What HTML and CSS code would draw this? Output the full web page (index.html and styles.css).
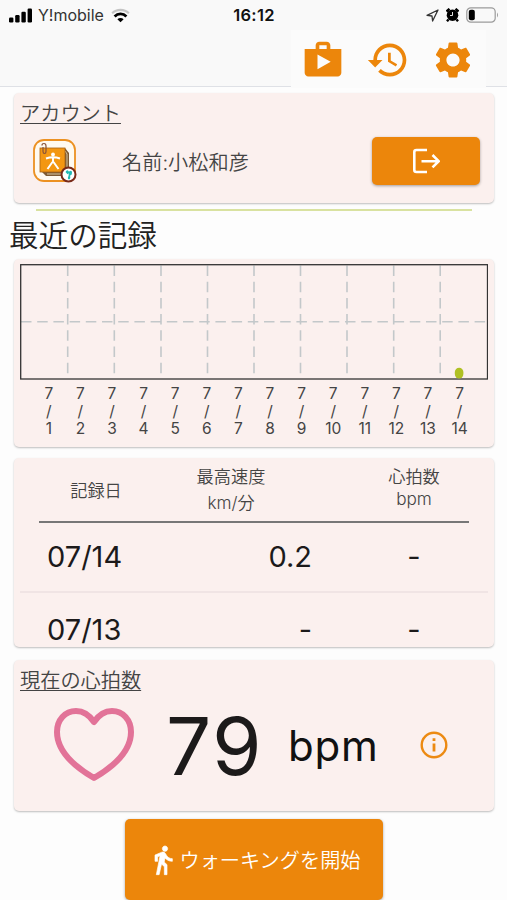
FILE: index.html
```html
<!DOCTYPE html>
<html lang="ja">
<head>
  <meta charset="UTF-8">
  <meta name="viewport" content="width=device-width, initial-scale=1.0">
  <title>ウォーキング</title>
  <link rel="stylesheet" href="styles.css">
</head>
<body>
<header class="header">
  <div class="status-bar">
    <div class="carrier">
      <svg class="signal" viewBox="0 0 23 15">
        <rect x="0" y="9.500" width="4.400" height="5" rx="1.200"/>
        <rect x="6.200" y="7" width="4.400" height="7.500" rx="1.200"/>
        <rect x="12.400" y="3.800" width="4.400" height="10.700" rx="1.200"/>
        <rect x="18.600" y="0.500" width="4.400" height="14" rx="1.200"/>
      </svg>
      <span>Y!mobile</span>
      <svg class="wifi" viewBox="0 0 20 15" fill="none" stroke-width="2.900">
        <path d="M1.200 5.200a12.500 12.500 0 0 1 17.600 0" stroke="#c4c4c4" stroke-width="2.200"/>
        <path d="M3.800 8.500a8.600 8.600 0 0 1 12.400 0" stroke="#000"/>
        <path d="M10 14.500l-3.300-3a4.600 4.600 0 0 1 6.600 0z" fill="#000"/>
      </svg>
    </div>
    <div class="clock">16:12</div>
    <div class="indicators">
      <svg width="13" height="13" viewBox="0 0 13 13" fill="none" stroke="#333" stroke-width="1.300" stroke-linejoin="round">
        <path d="M12 1L1 6.300l5 .7.600 5z"/>
      </svg>
      <svg width="13" height="14" viewBox="0 0 13 14">
        <circle cx="6.500" cy="7.200" r="5.800"/>
        <path d="M.5 3.500L3.500.8M12.500 3.500L9.500.8M2.500 11.500L1 13.300M10.500 11.500l1.500 1.800" stroke="#000" stroke-width="2.400"/>
        <path d="M6.500 4v3.500H4" fill="none" stroke="#fafafa" stroke-width=".9"/>
      </svg>
      <svg width="33" height="16" viewBox="0 0 33 16">
        <rect x=".8" y=".8" width="28.400" height="14.400" rx="4" fill="none" stroke="#9b9b9b" stroke-width="1.200"/>
        <rect x="2.800" y="2.700" width="6" height="10.600" rx="2"/>
        <path d="M31 5.500q2 2.500 0 5z" fill="#9b9b9b"/>
      </svg>
    </div>
  </div>
  <nav class="toolbar">
    <svg viewBox="0 0 24 24"><path d="M16 6V4c0-1.110-.89-2-2-2h-4c-1.110 0-2 .89-2 2v2H2v13c0 1.110.89 2 2 2h16c1.110 0 2-.89 2-2V6h-6zm-6-2h4v2h-4V4zM9 17V9l7.200 4L9 17z"/></svg>
    <svg viewBox="0 0 24 24"><path d="M13 3c-4.970 0-9 4.030-9 9H1l3.890 3.890.07.14L9 12H6c0-3.870 3.130-7 7-7s7 3.130 7 7-3.130 7-7 7c-1.930 0-3.680-.79-4.940-2.060l-1.420 1.420C8.270 19.990 10.510 21 13 21c4.970 0 9-4.030 9-9s-4.030-9-9-9zm-1 5v5l4.280 2.540.72-1.210-3.500-2.080V8H12z"/></svg>
    <svg viewBox="0 0 24 24"><path d="M19.140 12.940c.04-.3.060-.61.060-.94 0-.32-.02-.64-.07-.94l2.030-1.580c.18-.14.23-.41.12-.61l-1.920-3.320c-.12-.22-.37-.29-.59-.22l-2.390.96c-.5-.38-1.030-.7-1.620-.94l-.36-2.540c-.04-.24-.24-.41-.48-.41h-3.840c-.24 0-.43.17-.47.41l-.36 2.540c-.59.24-1.130.57-1.620.94l-2.390-.96c-.22-.08-.47 0-.59.22L2.740 8.870c-.12.21-.08.47.12.61l2.030 1.580c-.05.3-.09.63-.09.94s.02.64.07.94l-2.030 1.580c-.18.14-.23.41-.12.61l1.920 3.320c.12.22.37.29.59.22l2.390-.96c.5.38 1.030.7 1.620.94l.36 2.540c.05.24.24.41.48.41h3.840c.24 0 .44-.17.47-.41l.36-2.540c.59-.24 1.130-.56 1.620-.94l2.390.96c.22.08.47 0 .59-.22l1.920-3.320c.12-.22.07-.47-.12-.61l-2.010-1.580zM12 15.600c-1.980 0-3.600-1.620-3.600-3.600s1.620-3.600 3.600-3.600 3.600 1.620 3.600 3.600-1.620 3.600-3.600 3.600z"/></svg>
  </nav>
</header>

<main>
  <section class="card account">
    <h2 class="card-title">アカウント</h2>
    <div class="account-row">
      <svg class="avatar" viewBox="0 0 44 44">
        <rect x="1" y="1" width="41" height="41" rx="10" fill="#fffaf0" stroke="#ec9122" stroke-width="1.800"/>
        <path d="M8 9h24l4 5v23H13l-5-5z" fill="#7d5a34"/>
        <path d="M32 12l2 3v20H14" fill="none" stroke="#d9c7a0"/>
        <rect x="7" y="9" width="25" height="24" fill="#f39712" stroke="#a96416" stroke-width=".8"/>
        <circle cx="20" cy="15.500" r="1.900" fill="#fff"/>
        <path d="M13 19.500q7-2.500 14 0M20 18v6M19.500 23l-5 7M20.500 23l5 7" fill="none" stroke="#fff" stroke-width="2"/>
        <path d="M9 6.500q0-2 2-2t2 2.500v5.500q0 2-1.500 2t-1.500-2V8" fill="none" stroke="#87523a" stroke-width="1.200"/>
        <circle cx="35.500" cy="35.500" r="7" fill="#fff" stroke="#792a18" stroke-width="2"/>
        <path d="M32.500 33q1.500-3 3-1t-1 3.200zM36 32.500q3-2 3 1t-2 3q1 3-1 4-2-1-.5-3.500z" fill="#22b9b5"/>
      </svg>
      <span class="account-name">名前:小松和彦</span>
      <button class="btn logout" aria-label="ログアウト">
        <svg width="28" height="26" viewBox="0 0 28 26" fill="none" stroke="#fff" stroke-width="2.600">
          <path d="M15 2H4.500Q2.300 2 2.300 4v18q0 2 2.200 2H15M9.500 13.200H26M20.500 7l6.200 6.200-6.200 6.200"/>
        </svg>
      </button>
    </div>
  </section>

  <hr class="divider">
  <h1 class="page-title">最近の記録</h1>

  <section class="card chart">
    <svg class="plot" viewBox="0 0 468 116">
      <g class="grid-lines">
        <path d="M1 57.700H467"/>
        <path d="M47.700 1.500V110M94.300 1.500V110M141 1.500V110M187.500 1.500V110M234 1.500V110M280.500 1.500V110M327 1.500V110M373.700 1.500V110M420.200 1.500V110"/>
      </g>
      <rect x=".7" y=".7" width="466.800" height="114.300" fill="none" stroke="#333" stroke-width="1.300"/>
      <rect x="434.800" y="103.800" width="8.600" height="10.600" rx="4.300" fill="#afc023"/>
    </svg>
    <div class="labels">
      <span>7<br>/<br>1</span>
      <span>7<br>/<br>2</span>
      <span>7<br>/<br>3</span>
      <span>7<br>/<br>4</span>
      <span>7<br>/<br>5</span>
      <span>7<br>/<br>6</span>
      <span>7<br>/<br>7</span>
      <span>7<br>/<br>8</span>
      <span>7<br>/<br>9</span>
      <span>7<br>/<br>10</span>
      <span>7<br>/<br>11</span>
      <span>7<br>/<br>12</span>
      <span>7<br>/<br>13</span>
      <span>7<br>/<br>14</span>
    </div>
  </section>

  <section class="card records">
    <div class="records-head">
      <span class="col-date">記録日</span>
      <span class="col-speed">最高速度<br>km/分</span>
      <span class="col-heart">心拍数<br>bpm</span>
    </div>
    <div class="record">
      <span class="date">07/14</span>
      <span class="speed">0.2</span>
      <span class="heart">-</span>
    </div>
    <div class="record">
      <span class="date">07/13</span>
      <span class="speed">-</span>
      <span class="heart">-</span>
    </div>
  </section>

  <section class="card heart-rate">
    <h2 class="card-title">現在の心拍数</h2>
    <div class="rate-row">
      <svg class="heart-icon" viewBox="0 0 80 74">
        <path d="M40 14C34 5 28 3 22 3 11 3 3 12 3 24c0 17 13 32 37 46 24-14 37-29 37-46C77 12 69 3 58 3c-6 0-12 2-18 11z" fill="none" stroke="#e27398" stroke-width="6" stroke-linejoin="round"/>
      </svg>
      <span class="rate">79</span>
      <span class="unit">bpm</span>
      <svg class="info" viewBox="0 0 28 28" fill="none" stroke="#ec8a12" stroke-width="2.400">
        <circle cx="14" cy="14" r="12.300"/>
        <path d="M14 12.500v8M14 7.200v2.800" stroke-width="2.800"/>
      </svg>
    </div>
  </section>

  <button class="btn start">
    <svg viewBox="0 0 24 24" width="32" height="32"><path fill="#fff" stroke="#fff" stroke-width=".5" d="M13.500 5.500c1.100 0 2-.9 2-2s-.9-2-2-2-2 .9-2 2 .9 2 2 2zM9.800 8.900L7 23h2.100l1.800-8 2.100 2v6h2v-7.500l-2.100-2 .6-3C14.800 12 16.800 13 19 13v-2c-1.900 0-3.500-1-4.300-2.400l-1-1.600c-.4-.6-1-1-1.700-1-.3 0-.5.100-.8.100L6 8.300V13h2V9.600l1.800-.7"/></svg>
    <span>ウォーキングを開始</span>
  </button>
</main>
</body>
</html>
```
FILE: styles.css
```css
:root {
  --orange: #ec860b;
  --card: #fbf0ee;
  --text: #444;
  --dark: #1c1a1a;
}

* {
  margin: 0;
  padding: 0;
  box-sizing: border-box;
}

body {
  font-family: Inter, "Noto Sans CJK JP", sans-serif;
  background: #fdfdfd;
  color: var(--text);
  height: 900px;
  overflow: hidden;
}

svg {
  display: block;
  flex: none;
}

.header {
  height: 87px;
  background: linear-gradient(#dfe1e6, #dfe1e6) bottom / 100% 1px no-repeat #f9f9f9;
}

.status-bar {
  height: 30px;
  display: grid;
  grid-template-columns: 1fr auto 1fr;
  align-items: center;
  padding: 0 8px 0 9px;
  color: #333;
  font-size: 16px;
}

.carrier,
.indicators {
  display: flex;
  align-items: center;
}

.signal {
  width: 23px;
  height: 15px;
  margin-right: 6px;
}

.wifi {
  width: 19px;
  height: 15px;
  margin-left: 7px;
}

.clock {
  color: #111;
  font-size: 16.5px;
  font-weight: 600;
  letter-spacing: 0.3px;
}

.indicators {
  justify-content: flex-end;
  gap: 7px;
}

.toolbar {
  width: 195px;
  height: 58px;
  margin-left: 291px;
  padding: 8px 0 0 10px;
  display: flex;
  gap: 21px;
  background: #fbfbfb;
}

.toolbar svg {
  width: 44px;
  height: 44px;
  fill: var(--orange);
}

.card {
  width: 480px;
  margin-left: 14px;
  background: var(--card);
  border-radius: 5px;
  box-shadow: 0 1px 2px rgba(0, 0, 0, 0.25);
}

.card-title {
  font-size: 20.2px;
  font-weight: 350;
  line-height: 30px;
  padding-left: 6px;
  text-decoration: underline;
  text-decoration-thickness: 1px;
  text-underline-offset: 2px;
}

.account {
  height: 110px;
  margin-top: 6px;
  padding-top: 6px;
}

.account-row {
  display: flex;
  align-items: center;
  padding: 8px 14px 0 19px;
}

.avatar {
  width: 44px;
  height: 44px;
}

.account-name {
  flex: 1;
  margin-left: 45px;
  font-size: 20.2px;
  font-weight: 350;
}

.btn {
  background: var(--orange);
  border: none;
  border-radius: 5px;
  color: #fff;
  font-family: inherit;
  display: flex;
  align-items: center;
  justify-content: center;
  box-shadow: 0 1px 3px rgba(0, 0, 0, 0.35);
}

.logout {
  width: 108px;
  height: 48px;
}

.divider {
  width: 436px;
  height: 2px;
  margin: 6px 0 0 36px;
  border: none;
  background: #d9e2a0;
}

.page-title {
  height: 48px;
  padding-left: 9px;
  font-size: 29.6px;
  font-weight: 350;
  line-height: 48px;
  color: #222;
}

.chart {
  height: 188px;
  padding: 5px 6px 0;
}

.plot {
  width: 468px;
  height: 116px;
}

.grid-lines path {
  stroke: #c3c8ca;
  stroke-width: 1.6;
  stroke-dasharray: 10.5 5.7;
  fill: none;
}

.labels {
  width: 442.4px;
  margin: 5px 0 0 13px;
  display: grid;
  grid-template-columns: repeat(14, 1fr);
  text-align: center;
  font-size: 15.5px;
  line-height: 17.5px;
}

.records {
  height: 189px;
  margin-top: 11px;
  padding: 0 6px;
  overflow: hidden;
}

.records-head {
  height: 65px;
  margin: 0 19px;
  display: grid;
  grid-template-columns: 114px 156px 1fr;
  align-items: center;
  text-align: center;
  font-size: 17.2px;
  font-weight: 350;
  border-bottom: 2px solid #777;
}

.col-speed {
  line-height: 26px;
}

.col-heart {
  padding-left: 50px;
  line-height: 22px;
  margin-top: -3px;
}

.record {
  height: 70px;
  display: grid;
  grid-template-columns: 130px 162px 1fr;
  align-items: center;
  font-size: 29px;
  line-height: 34px;
  color: var(--dark);
  border-bottom: 2px solid #f0e4e4;
}

.record + .record {
  height: 75px;
}

.date {
  padding-left: 27px;
}

.speed {
  text-align: right;
}

.heart {
  padding-left: 28px;
  text-align: center;
}

.heart-rate {
  height: 151px;
  margin-top: 13px;
  padding-top: 6px;
}

.rate-row {
  display: flex;
  align-items: center;
  height: 98px;
  padding-left: 40px;
  color: var(--dark);
}

.heart-icon {
  width: 80px;
  height: 74px;
}

.rate {
  margin-left: 32px;
  font-size: 80px;
  letter-spacing: 1.5px;
  width: 95px;
}

.unit {
  margin-left: 27px;
  font-size: 42px;
  letter-spacing: 0.8px;
  color: #111;
  width: 91px;
}

.info {
  width: 28px;
  height: 28px;
  margin-left: 41px;
}

.start {
  width: 258px;
  height: 81px;
  margin: 8px 0 0 125px;
  font-size: 20.2px;
  font-weight: 350;
}
```
